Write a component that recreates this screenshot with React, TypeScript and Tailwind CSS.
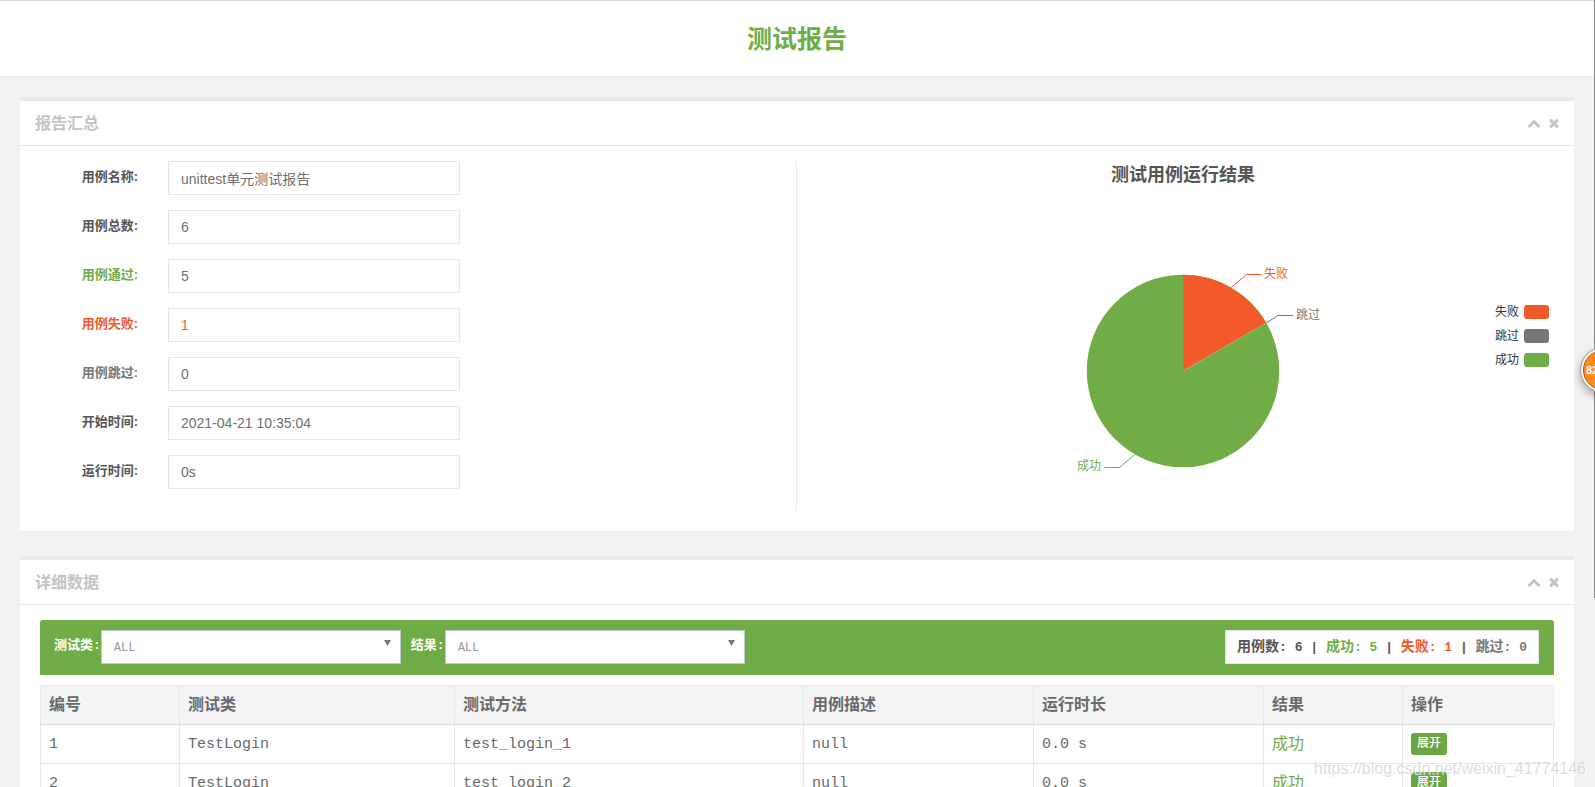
import type { ReactNode } from "react";

const summary = [
  { id: "name", label: "用例名称:", value: "unittest单元测试报告", labelColor: "text-[#555]", valueColor: "text-[#6f6f6f]" },
  { id: "total", label: "用例总数:", value: "6", labelColor: "text-[#555]", valueColor: "text-[#6f6f6f]" },
  { id: "passed", label: "用例通过:", value: "5", labelColor: "text-[#70ad47]", valueColor: "text-[#6f6f6f]" },
  { id: "failed", label: "用例失败:", value: "1", labelColor: "text-[#f25a29]", valueColor: "text-[#f25a29]" },
  { id: "skipped", label: "用例跳过:", value: "0", labelColor: "text-[#777]", valueColor: "text-[#6f6f6f]" },
  { id: "start", label: "开始时间:", value: "2021-04-21 10:35:04", labelColor: "text-[#555]", valueColor: "text-[#6f6f6f]" },
  { id: "duration", label: "运行时间:", value: "0s", labelColor: "text-[#555]", valueColor: "text-[#6f6f6f]" },
];

const legend = [
  { name: "失败", swatch: "bg-[#f25a29]" },
  { name: "跳过", swatch: "bg-[#777]" },
  { name: "成功", swatch: "bg-[#70ad47]" },
];

const columns = [
  { title: "编号", width: "w-[139px]" },
  { title: "测试类", width: "w-[275px]" },
  { title: "测试方法", width: "w-[349px]" },
  { title: "用例描述", width: "w-[230px]" },
  { title: "运行时长", width: "w-[230px]" },
  { title: "结果", width: "w-[139px]" },
  { title: "操作", width: "w-[151px]" },
];

const cases = [
  { id: 1, testClass: "TestLogin", method: "test_login_1", desc: "null", time: "0.0 s", result: "成功" },
  { id: 2, testClass: "TestLogin", method: "test_login_2", desc: "null", time: "0.0 s", result: "成功" },
];

function ChevronUpIcon() {
  return (
    <svg className="size-3.5" viewBox="0 0 1792 1792" fill="currentColor" aria-hidden="true">
      <path d="M1683 1331l-166 165q-19 19-45 19t-45-19l-531-531-531 531q-19 19-45 19t-45-19l-166-165q-19-19-19-45.5t19-45.5l742-741q19-19 45-19t45 19l742 741q19 19 19 45.5t-19 45.5z" />
    </svg>
  );
}

function TimesIcon() {
  return (
    <svg className="size-3.5" viewBox="0 0 1792 1792" fill="currentColor" aria-hidden="true">
      <path d="M1490 1322q0 40-28 68l-136 136q-28 28-68 28t-68-28l-294-294-294 294q-28 28-68 28t-68-28l-136-136q-28-28-28-68t28-68l294-294-294-294q-28-28-28-68t28-68l136-136q28-28 68-28t68 28l294 294 294-294q28-28 68-28t68 28l136 136q28 28 28 68t-28 68l-294 294 294 294q28 28 28 68z" />
    </svg>
  );
}

function Panel({ title, children }: { title: string; children: ReactNode }) {
  return (
    <section className="border-t-4 border-[#e7eaec] bg-white">
      <div className="flex h-[45px] items-center justify-between border-b border-[#e7eaec] pl-[15px] pr-[13px] text-[#c4c4c4]">
        <h2 className="pt-0.5 text-base leading-6 font-bold">{title}</h2>
        <div className="flex gap-1.5">
          <button type="button" aria-label="收起">
            <ChevronUpIcon />
          </button>
          <button type="button" aria-label="关闭">
            <TimesIcon />
          </button>
        </div>
      </div>
      {children}
    </section>
  );
}

function PieChart() {
  return (
    <svg width="320" height="220" viewBox="0 0 320 220" className="text-xs" role="img" aria-label="测试用例运行结果">
      <circle cx="160" cy="110" r="96.25" fill="#70ad47" />
      <path d="M160 110V13.75A96.25 96.25 0 0 1 243.35 61.87Z" fill="#f25a29" />
      <path d="M160 110L243.35 61.87" stroke="#c3b48e" strokeWidth="0.7" />
      <g fill="none" strokeWidth="1">
        <path d="M208.1 26.6L223.5 13.5H238.5" stroke="#f25a29" />
        <path d="M243.3 61.9L255 54.5H270" stroke="#777" />
        <path d="M111.9 193.4L96.5 206.5H81.5" stroke="#70ad47" />
      </g>
      <text x="241" y="17" fill="#f25a29">失败</text>
      <text x="273" y="58" fill="#777">跳过</text>
      <text x="54" y="209" fill="#70ad47">成功</text>
    </svg>
  );
}

function Filter({ id, label }: { id: string; label: string }) {
  return (
    <div className="flex items-start">
      <label htmlFor={id} className="text-[13px] leading-8 font-bold text-white">
        {label}
      </label>
      <div className="relative">
        <select
          id={id}
          className="h-[34px] w-[300px] appearance-none rounded-none border border-[#c2cad8] bg-white px-3 pt-0.5 text-xs text-[#999]"
        >
          <option>ALL</option>
        </select>
        <svg className="pointer-events-none absolute top-2.5 right-2.5 h-[6px] w-[7px]" viewBox="0 0 7 6" aria-hidden="true">
          <path d="M0 0H7L3.5 6Z" fill="#777" />
        </svg>
      </div>
    </div>
  );
}

export default function App() {
  return (
    <div className="relative flex h-screen overflow-hidden bg-[#f2f2f2] font-['Liberation_Sans','Noto_Sans_CJK_SC',sans-serif]">
      <div className="min-w-0 flex-1">
        <header className="flex h-[77px] items-center justify-center border-y border-t-[#d8dade] border-b-[#e7eaec] bg-white">
          <h1 className="text-[25px] leading-8 font-bold text-[#70ad47]">测试报告</h1>
        </header>

        <main className="grid gap-[25px] p-5">
          <Panel title="报告汇总">
            <div className="grid grid-cols-2 pt-[15px] pb-5">
              <form className="grid min-h-[350px] content-start gap-y-[15px] border-r border-[#e7eaec]">
                {summary.map((item) => (
                  <div key={item.id} className="grid grid-cols-[118px_292px] gap-x-[30px]">
                    <label htmlFor={item.id} className={`text-right text-[13px] leading-8 font-bold ${item.labelColor}`}>
                      {item.label}
                    </label>
                    <input
                      id={item.id}
                      className={`h-[34px] border border-[#e5e6e7] px-3 text-sm ${item.valueColor}`}
                      type="text"
                      value={item.value}
                      readOnly
                    />
                  </div>
                ))}
              </form>

              <div className="pr-5 pl-[15px]">
                <h3 className="text-center text-lg leading-7 font-bold text-[#555]">测试用例运行结果</h3>
                <div className="grid grid-cols-[1fr_auto_1fr] items-start">
                  <div className="col-start-2 pt-[72px]">
                    <PieChart />
                  </div>
                  <ul className="justify-self-end pt-[111px] pr-[5px] text-xs leading-6 text-[#333]">
                    {legend.map((item) => (
                      <li key={item.name} className="flex items-center gap-[5px]">
                        {item.name}
                        <span className={`h-3.5 w-[25px] rounded-[3px] ${item.swatch}`} />
                      </li>
                    ))}
                  </ul>
                </div>
              </div>
            </div>
          </Panel>

          <Panel title="详细数据">
            <div className="px-5 pt-[15px] font-['Liberation_Mono','Noto_Sans_CJK_SC',monospace]">
              <div className="mb-2.5 flex h-[55px] items-start justify-between rounded-t-[3px] bg-[#70ad47] pt-2.5 pr-[15px] pl-3.5">
                <div className="flex gap-2.5">
                  <Filter id="test-class" label="测试类:" />
                  <Filter id="result" label="结果:" />
                </div>
                <p className="h-[34px] border border-[#e5e6e7] bg-white px-[11px] text-[13px] leading-8 font-bold whitespace-pre text-[#555]">
                  <span className="text-sm leading-8">用例数</span>: 6 |{" "}
                  <span className="text-[#70ad47]">
                    <span className="text-sm leading-8">成功</span>: 5
                  </span>{" "}
                  |{" "}
                  <span className="text-[#f25a29]">
                    <span className="text-sm leading-8">失败</span>: 1
                  </span>{" "}
                  |{" "}
                  <span className="text-[#777]">
                    <span className="text-sm leading-8">跳过</span>: 0
                  </span>
                </p>
              </div>

              <table className="w-full table-fixed border-collapse border border-[#e7e7e7] text-[15px] leading-6 text-[#676a6c]">
                <thead className="bg-[#f4f4f4] text-base leading-6">
                  <tr className="h-[39px]">
                    {columns.map((col) => (
                      <th key={col.title} className={`border border-[#e7e7e7] border-b-[#ddd] px-2 pt-0.5 text-left font-bold ${col.width}`}>
                        {col.title}
                      </th>
                    ))}
                  </tr>
                </thead>
                <tbody>
                  {cases.map((row) => (
                    <tr key={row.id} className="h-[39px]">
                      <td className="border border-[#e7e7e7] px-2 pt-0.5">{row.id}</td>
                      <td className="border border-[#e7e7e7] px-2 pt-0.5">{row.testClass}</td>
                      <td className="border border-[#e7e7e7] px-2 pt-0.5">{row.method}</td>
                      <td className="border border-[#e7e7e7] px-2 pt-0.5">{row.desc}</td>
                      <td className="border border-[#e7e7e7] px-2 pt-0.5">{row.time}</td>
                      <td className="border border-[#e7e7e7] px-2 pt-0.5 text-base leading-6 text-[#70ad47]">{row.result}</td>
                      <td className="border border-[#e7e7e7] px-2">
                        <button type="button" className="block h-[22px] rounded-[3px] bg-[#6ba644] px-1.5 text-xs font-medium text-white">
                          展开
                        </button>
                      </td>
                    </tr>
                  ))}
                </tbody>
              </table>
            </div>
          </Panel>
        </main>
      </div>

      {/* scrollbar edge */}
      <div className="w-px bg-[#f2f2f2]">
        <div className="h-[76%] bg-[#8b8b8b]" />
      </div>

      {/* floating score bubble, half outside the window */}
      <div className="absolute top-[347px] -right-[31px] size-[46px] rounded-full border border-[#9a9a9a] bg-[#f4f4f4] p-0.5 shadow-[0_4px_8px_rgba(0,0,0,0.3)]">
        <div className="size-full rounded-full border border-[#b5520f] bg-[#ff8a1c] pl-0.5 text-[11px] leading-[38px] font-bold text-white">
          82
        </div>
      </div>

      <p className="pointer-events-none absolute right-[9px] bottom-1.5 text-base leading-6 text-[#bbb]/50 [text-shadow:1px_1px_0_rgba(255,255,255,0.7)]">
        https://blog.csdn.net/weixin_41774146
      </p>
    </div>
  );
}
